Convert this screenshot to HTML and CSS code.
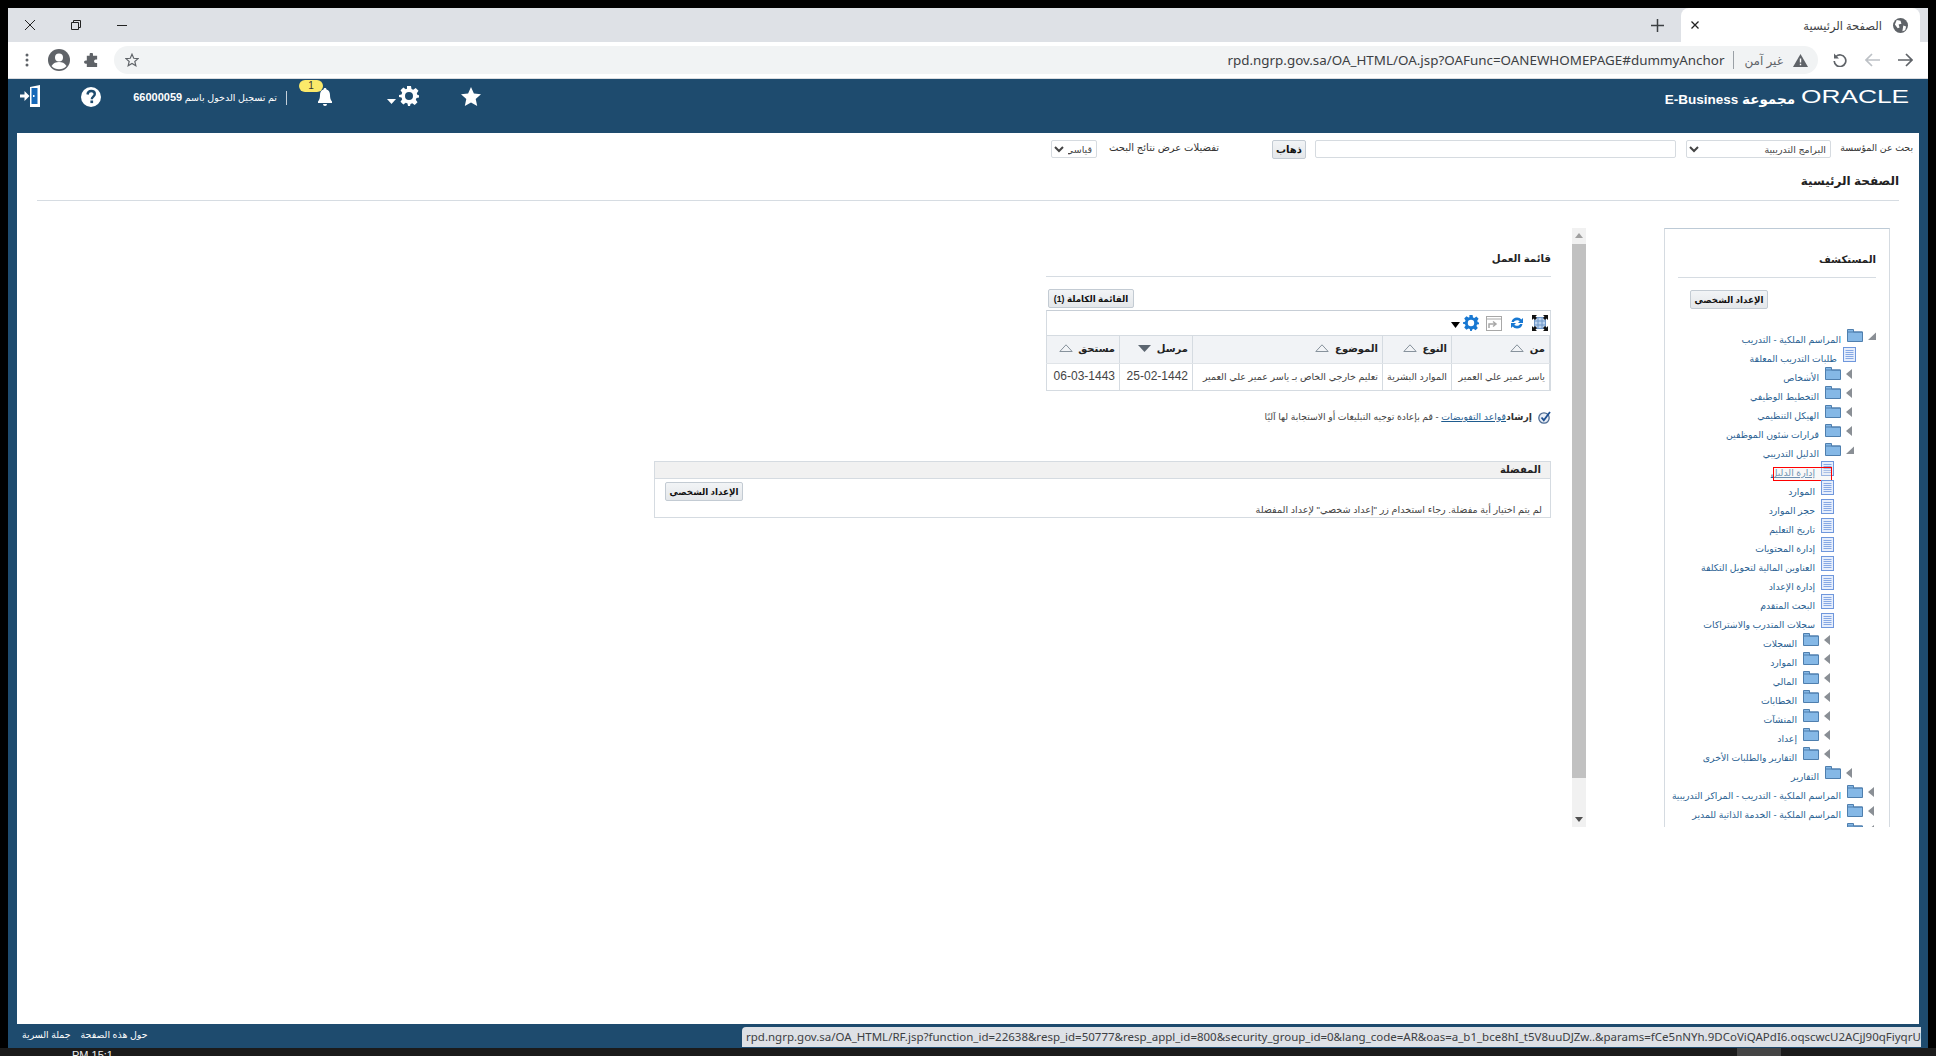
FILE: index.html
```html
<!DOCTYPE html>
<html lang="ar" dir="rtl">
<head>
  <meta charset="UTF-8">
  <title>الصفحة الرئيسية</title>
  <link rel="stylesheet" href="styles.css">
</head>
<body>
  <svg class="defs" width="0" height="0">
    <symbol id="folder" viewBox="0 0 16 13">
      <path d="M.5 12.500V.5h6v2.500h9v9.500z" fill="#85b8e6" stroke="#4f7fae"/>
      <path d="M.5 3h15" stroke="#4f7fae"/>
    </symbol>
    <symbol id="doc" viewBox="0 0 13 15">
      <rect x=".5" y=".5" width="12" height="14" fill="#e6eefc" stroke="#6f97dc"/>
      <path d="M2.500 3.500h8M2.500 5.500h8M2.500 7.500h8M2.500 9.500h8M2.500 11.500h8" stroke="#86a8e4"/>
    </symbol>
    <symbol id="closed" viewBox="0 0 8 12">
      <path d="M6 1v10L0 6z" fill="#8a8f95"/>
    </symbol>
    <symbol id="open" viewBox="0 0 8 12">
      <path d="M8 2.500V10H0z" fill="#8a8f95"/>
    </symbol>
    <symbol id="sort" viewBox="0 0 14 8">
      <path d="M.8 7.500L7 .8l6.200 6.700z" fill="none" stroke="#87929c"/>
    </symbol>
    <symbol id="gear" viewBox="0 0 20 20">
      <path fill-rule="evenodd" d="M8 0h4l.5 3 1.700.7L16.700 2l2.800 2.800-1.700 2.500.7 1.700 3 .5H20v2l-2.500.5-.7 1.700 1.700 2.500-2.800 2.800-2.500-1.700-1.700.7L11 20H9l-.5-2.500-1.700-.7-2.500 1.700L1.500 15.700l1.700-2.500-.7-1.700L0 11V9l2.500-.5.7-1.700L1.500 4.300 4.300 1.500l2.500 1.700 1.200-.5zM10 6a4 4 0 1 0 0 8 4 4 0 0 0 0-8z"/>
    </symbol>
  </svg>

  <div class="window">
    <div class="tabstrip">
      <div class="tab">
        <svg class="globe" width="15" height="15" viewBox="0 0 16 16"><circle cx="8" cy="8" r="8" fill="#5f6368"/><path d="M4 2l4 1 1 3-3 1 1 3-2 1-3-4zM11 8l3 1-1 4-3 1z" fill="#fff"/></svg>
        <span class="tab-title">الصفحة الرئيسية</span>
        <svg class="tab-close" width="8" height="8" viewBox="0 0 8 8"><path d="M.5.5l7 7M7.500.5l-7 7" stroke="#222" stroke-width="1.300"/></svg>
      </div>
      <svg class="new-tab" width="13" height="13" viewBox="0 0 13 13"><path d="M6.500 0v13M0 6.500h13" stroke="#3c4043" stroke-width="1.500"/></svg>
      <div class="win-controls">
        <svg width="10" height="1" viewBox="0 0 10 1"><path d="M0 .5h10" stroke="#222"/></svg>
        <svg width="10" height="10" viewBox="0 0 10 10"><path d="M.5 2.500h7v7h-7zM2.500 2.500v-2h7v7h-2" fill="none" stroke="#222"/></svg>
        <svg width="10" height="10" viewBox="0 0 10 10"><path d="M0 0l10 10M10 0L0 10" stroke="#222"/></svg>
      </div>
    </div>

    <div class="toolbar">
      <svg class="nav-icon" width="15" height="14" viewBox="0 0 15 14"><path d="M0 7h14M8 1l6 6-6 6" fill="none" stroke="#5f6368" stroke-width="1.700"/></svg>
      <svg class="nav-icon" width="15" height="14" viewBox="0 0 15 14"><path d="M15 7H1M7 1L1 7l6 6" fill="none" stroke="#bdc1c6" stroke-width="1.700"/></svg>
      <svg class="nav-icon" width="14" height="14" viewBox="0 0 14 14"><path d="M3 3.500A5.800 5.800 0 1 1 1.200 8" fill="none" stroke="#5f6368" stroke-width="1.700"/><path d="M1 .5v5h5z" fill="#5f6368"/></svg>
      <div class="omnibox">
        <svg width="15" height="13" viewBox="0 0 15 13"><path d="M7.500 0L15 13H0z" fill="#5f6368"/><path d="M7.500 4.500v4M7.500 9.700v1.500" stroke="#fff" stroke-width="1.400"/></svg>
        <span class="insecure">غير آمن</span>
        <span class="omni-sep"></span>
        <bdi class="url" dir="ltr">rpd.ngrp.gov.sa/OA_HTML/OA.jsp?OAFunc=OANEWHOMEPAGE#dummyAnchor</bdi>
        <svg class="omni-star" width="14" height="14" viewBox="0 0 24 24"><path d="M12 2l3 7 7.500.6-5.700 4.900 1.800 7.400L12 18l-6.600 3.900 1.800-7.400L1.500 9.600 9 9z" fill="none" stroke="#5f6368" stroke-width="2"/></svg>
      </div>
      <svg class="puzzle" width="15" height="15" viewBox="0 0 16 16"><path d="M6 1.500a1.800 1.800 0 0 1 3.600 0V3H14v4h-1.500a1.800 1.800 0 0 0 0 3.600H14V15H3v-3.500H1.800a1.800 1.800 0 0 1 0-3.600H3V3h3z" fill="#5f6368"/></svg>
      <svg class="profile" width="22" height="22" viewBox="0 0 22 22"><circle cx="11" cy="11" r="11" fill="#5f6368"/><circle cx="11" cy="8.500" r="4" fill="#fff"/><path d="M3.500 17c2-3.300 4.500-4 7.500-4s5.500.7 7.500 4c-2 2.200-4.500 3.300-7.500 3.300S5.500 19.200 3.500 17z" fill="#fff"/></svg>
      <svg class="dots" width="4" height="14" viewBox="0 0 4 14"><circle cx="2" cy="2" r="1.500" fill="#5f6368"/><circle cx="2" cy="7" r="1.500" fill="#5f6368"/><circle cx="2" cy="12" r="1.500" fill="#5f6368"/></svg>
    </div>

    <div class="app">
      <header class="app-header">
        <div class="brand">
          <span class="oracle">ORACLE</span>
          <span class="brand-name">مجموعة E-Business</span>
        </div>
        <div class="app-tools" dir="ltr">
          <svg class="ico-door" width="20" height="22" viewBox="0 0 20 22"><path d="M10 2l10-2v22H10z" fill="#fff"/><path d="M11.500 3h6v16h-6z" fill="#1668b8"/><rect x="13" y="10" width="1.500" height="2" fill="#fff"/><path d="M0 9.500h4.500V6l5 5-5 5v-3.500H0z" fill="#fff"/></svg>
          <svg class="ico-help" width="20" height="20" viewBox="0 0 20 20"><circle cx="10" cy="10" r="10" fill="#fff"/><path d="M6.500 7.500C6.800 5 8.300 4 10.200 4c2.200 0 3.600 1.300 3.600 3 0 2.700-3 2.600-3 5.200" fill="none" stroke="#1e4b6e" stroke-width="2.400"/><rect x="9.400" y="13.500" width="2.700" height="2.600" fill="#1e4b6e"/></svg>
          <span class="user" dir="rtl">تم تسجيل الدخول باسم <b>66000059</b></span>
          <span class="tools-sep"></span>
          <div class="bell-wrap">
            <span class="badge">1</span>
            <svg width="14" height="18" viewBox="0 0 14 18"><path d="M7 0c1 0 1.500.7 1.500 1.500C11 2.300 12 4.500 12 7c0 3 .6 5 2 6.500V15H0v-1.500C1.400 12 2 10 2 7c0-2.500 1-4.700 3.500-5.500C5.500.7 6 0 7 0zM5 16h4a2 2 0 0 1-4 0z" fill="#fff"/></svg>
          </div>
          <svg class="ico-caret" width="9" height="5" viewBox="0 0 9 5"><path d="M0 0h9L4.500 5z" fill="#fff"/></svg>
          <svg class="ico-gear" width="20" height="20" fill="#fff"><use href="#gear"/></svg>
          <svg class="ico-star" width="20" height="19" viewBox="0 0 20 19"><path d="M10 0l2.900 6.500 7.100.7-5.300 4.800 1.500 7L10 15.400 3.800 19l1.500-7L0 7.200l7.100-.7z" fill="#fff"/></svg>
        </div>
      </header>

      <main class="content">
        <form class="search-row">
          <label class="search-label">بحث عن المؤسسة</label>
          <select class="field select-org"><option>البرامج التدريبية</option></select>
          <input class="field search-input" type="text">
          <button type="button" class="btn btn-go">ذهاب</button>
          <label class="results-label">تفضيلات عرض نتائج البحث</label>
          <select class="field select-view"><option>قياسي</option></select>
        </form>

        <h1 class="page-title">الصفحة الرئيسية</h1>

        <div class="columns">
          <aside class="navigator">
            <h2 class="section-title">المستكشف</h2>
            <button type="button" class="btn btn-personal">الإعداد الشخصي</button>
            <div class="tree">
              <div class="row l0"><svg class="arrow"><use href="#open"/></svg><svg class="folder"><use href="#folder"/></svg><a>المراسم الملكية - التدريب</a></div>
              <div class="row d1"><svg class="doc"><use href="#doc"/></svg><a>طلبات التدريب المعلقة</a></div>
              <div class="row l1"><svg class="arrow"><use href="#closed"/></svg><svg class="folder"><use href="#folder"/></svg><a>الأشخاص</a></div>
              <div class="row l1"><svg class="arrow"><use href="#closed"/></svg><svg class="folder"><use href="#folder"/></svg><a>التخطيط الوظيفي</a></div>
              <div class="row l1"><svg class="arrow"><use href="#closed"/></svg><svg class="folder"><use href="#folder"/></svg><a>الهيكل التنظيمي</a></div>
              <div class="row l1"><svg class="arrow"><use href="#closed"/></svg><svg class="folder"><use href="#folder"/></svg><a>قرارات شئون الموظفين</a></div>
              <div class="row l1"><svg class="arrow"><use href="#open"/></svg><svg class="folder"><use href="#folder"/></svg><a>الدليل التدريبي</a></div>
              <div class="row d2 focused"><svg class="doc"><use href="#doc"/></svg><a>إدارة الدليل</a><span class="focus-box"></span></div>
              <div class="row d2"><svg class="doc"><use href="#doc"/></svg><a>الموارد</a></div>
              <div class="row d2"><svg class="doc"><use href="#doc"/></svg><a>حجز الموارد</a></div>
              <div class="row d2"><svg class="doc"><use href="#doc"/></svg><a>تاريخ التعليم</a></div>
              <div class="row d2"><svg class="doc"><use href="#doc"/></svg><a>إدارة المحتويات</a></div>
              <div class="row d2"><svg class="doc"><use href="#doc"/></svg><a>العناوين المالية لتحويل التكلفة</a></div>
              <div class="row d2"><svg class="doc"><use href="#doc"/></svg><a>إدارة الإعداد</a></div>
              <div class="row d2"><svg class="doc"><use href="#doc"/></svg><a>البحث المتقدم</a></div>
              <div class="row d2"><svg class="doc"><use href="#doc"/></svg><a>سجلات المتدرب والاشتراكات</a></div>
              <div class="row l2"><svg class="arrow"><use href="#closed"/></svg><svg class="folder"><use href="#folder"/></svg><a>السجلات</a></div>
              <div class="row l2"><svg class="arrow"><use href="#closed"/></svg><svg class="folder"><use href="#folder"/></svg><a>الموارد</a></div>
              <div class="row l2"><svg class="arrow"><use href="#closed"/></svg><svg class="folder"><use href="#folder"/></svg><a>المالي</a></div>
              <div class="row l2"><svg class="arrow"><use href="#closed"/></svg><svg class="folder"><use href="#folder"/></svg><a>الخطابات</a></div>
              <div class="row l2"><svg class="arrow"><use href="#closed"/></svg><svg class="folder"><use href="#folder"/></svg><a>المنشآت</a></div>
              <div class="row l2"><svg class="arrow"><use href="#closed"/></svg><svg class="folder"><use href="#folder"/></svg><a>إعداد</a></div>
              <div class="row l2"><svg class="arrow"><use href="#closed"/></svg><svg class="folder"><use href="#folder"/></svg><a>التقارير والطلبات الأخرى</a></div>
              <div class="row l1"><svg class="arrow"><use href="#closed"/></svg><svg class="folder"><use href="#folder"/></svg><a>التقارير</a></div>
              <div class="row l0"><svg class="arrow"><use href="#closed"/></svg><svg class="folder"><use href="#folder"/></svg><a>المراسم الملكية - التدريب - المراكز التدريبية</a></div>
              <div class="row l0"><svg class="arrow"><use href="#closed"/></svg><svg class="folder"><use href="#folder"/></svg><a>المراسم الملكية - الخدمة الذاتية للمدير</a></div>
              <div class="row l0"><svg class="arrow"><use href="#closed"/></svg><svg class="folder"><use href="#folder"/></svg><a></a></div>
            </div>
          </aside>

          <div class="scrollbar">
            <svg width="8" height="5" viewBox="0 0 8 5"><path d="M4 0l4 5H0z" fill="#a0a0a0"/></svg>
            <div class="thumb"></div>
            <svg width="8" height="5" viewBox="0 0 8 5"><path d="M0 0h8L4 5z" fill="#505050"/></svg>
          </div>

          <section class="main-col">
            <div class="worklist">
              <h2 class="section-title">قائمة العمل</h2>
              <button type="button" class="btn btn-full">القائمة الكاملة (1)</button>
              <div class="table-box">
                <div class="table-tools">
                  <svg width="16" height="16" viewBox="0 0 16 16"><rect x="2.500" y="2.500" width="11" height="11" fill="#bcd3ee" stroke="#6f97c8"/><path d="M2.500 6h11M2.500 10h11M6 2.500v11M10 2.500v11" stroke="#6f97c8"/><path d="M0 0h5L3.500 1.500 5 3 3 5 1.500 3.500 0 5zM16 0v5l-1.500-1.500L13 5l-2-2 1.500-1.500L11 0zM0 16v-5l1.500 1.500L3 11l2 2-1.500 1.500L5 16zM16 16h-5l1.500-1.500L11 13l2-2 1.500 1.500L16 11z" fill="#111"/></svg>
                  <svg width="14" height="14" viewBox="0 0 14 14"><path d="M1.500 6C2 3 4.300 1.500 7 1.500c2 0 3.300.8 4.300 2L13 2v5H8l1.700-1.700C9 4.500 8 4.200 7 4.200 5.400 4.200 4.300 5 4 6zM12.500 8c-.5 3-2.800 4.500-5.500 4.500-2 0-3.300-.8-4.300-2L1 12V7h5L4.300 8.700C5 9.500 6 9.800 7 9.800c1.600 0 2.700-.8 3-1.800z" fill="#1878d2"/></svg>
                  <svg width="16" height="15" viewBox="0 0 16 15"><rect x=".5" y=".5" width="15" height="14" fill="#fff" stroke="#a8a8a8"/><path d="M.5 3h15" stroke="#a8a8a8"/><path d="M3 12V8h6M7 5.500L10 8l-3 2.500" fill="none" stroke="#a8a8a8" stroke-width="1.500"/></svg>
                  <svg class="tools-gear" width="16" height="16" fill="#1878d2"><use href="#gear"/></svg>
                  <svg class="tools-caret" width="9" height="6" viewBox="0 0 9 6"><path d="M0 0h9L4.500 6z" fill="#000"/></svg>
                </div>
                <table class="notif-table">
                  <colgroup>
                    <col class="col-from"><col class="col-type"><col class="col-subject"><col class="col-date"><col class="col-date">
                  </colgroup>
                  <thead>
                    <tr>
                      <th>من <svg class="sort"><use href="#sort"/></svg></th>
                      <th>النوع <svg class="sort"><use href="#sort"/></svg></th>
                      <th>الموضوع <svg class="sort"><use href="#sort"/></svg></th>
                      <th>مرسل <svg class="sort-down" width="13" height="7" viewBox="0 0 13 7"><path d="M0 0h13L6.500 7z" fill="#5c6670"/></svg></th>
                      <th>مستحق <svg class="sort"><use href="#sort"/></svg></th>
                    </tr>
                  </thead>
                  <tbody>
                    <tr>
                      <td>ياسر عمير علي العمير</td>
                      <td>الموارد البشرية</td>
                      <td>تعليم خارجي الخاص بـ ياسر عمير علي العمير</td>
                      <td class="num">25-02-1442</td>
                      <td class="num">06-03-1443</td>
                    </tr>
                  </tbody>
                </table>
              </div>
              <p class="tip">
                <svg width="13" height="13" viewBox="0 0 13 13"><circle cx="6" cy="7" r="5.200" fill="#e9eef6" stroke="#4d6c94" stroke-width="1.300"/><path d="M3.500 6.500l2.300 2.700L12 1" fill="none" stroke="#1d4f91" stroke-width="1.800"/></svg>
                <span><b>إرشاد</b><a>قواعد التفويضات</a> - قم بإعادة توجيه التبليغات أو الاستجابة لها آليًا</span>
              </p>
            </div>

            <div class="favorites">
              <div class="fav-head">المفضلة</div>
              <div class="fav-body">
                <button type="button" class="btn btn-personal-fav">الإعداد الشخصي</button>
                <p class="fav-note">لم يتم اختيار أية مفضلة. رجاء استخدام زر "إعداد شخصي" لإعداد المفضلة</p>
              </div>
            </div>
          </section>
        </div>
      </main>

      <footer class="app-footer" dir="ltr">
        <span dir="rtl">جملة السرية</span>
        <span dir="rtl">حول هذه الصفحة</span>
      </footer>
    </div>

    <div class="status-url" dir="ltr">rpd.ngrp.gov.sa/OA_HTML/RF.jsp?function_id=22638&amp;resp_id=50777&amp;resp_appl_id=800&amp;security_group_id=0&amp;lang_code=AR&amp;oas=a_b1_bce8hI_t5V8uuDJZw..&amp;params=fCe5nNYh.9DCoViQAPdI6.oqscwcU2ACjJ90qFiyqrU</div>
  </div>

  <div class="taskbar" dir="ltr"><span>PM 15:1</span><i></i></div>
</body>
</html>
```

FILE: styles.css
```css
html, body {
  margin: 0;
  height: 100%;
  overflow: hidden;
}
body {
  background: #000;
  padding: 8px 8px 0;
  box-sizing: border-box;
  font-family: "Liberation Sans", "DejaVu Sans", sans-serif;
  font-size: 10px;
  color: #333;
}
.defs {
  position: absolute;
}
.window {
  position: relative;
  height: 1040px;
  display: flex;
  flex-direction: column;
}

/* browser chrome */
.tabstrip {
  height: 34px;
  flex-shrink: 0;
  background: #dee1e6;
  display: flex;
  align-items: center;
  padding-right: 8px;
}
.tab {
  width: 239px;
  height: 34px;
  background: #fff;
  border-radius: 8px 8px 0 0;
  display: flex;
  align-items: center;
  padding: 0 12px 0 10px;
  box-sizing: border-box;
  font-family: "Noto Sans", "DejaVu Sans", sans-serif;
  font-size: 11.500px;
  color: #3c4043;
}
.tab-title {
  margin-right: 11px;
}
.tab-close {
  margin-right: auto;
}
.new-tab {
  margin-right: 17px;
}
.win-controls {
  margin-right: auto;
  margin-left: 17px;
  display: flex;
  flex-direction: row;
  align-items: center;
  gap: 36px;
}
.toolbar {
  height: 37px;
  flex-shrink: 0;
  background: #fff;
  border-bottom: 1px solid #dadce0;
  box-sizing: border-box;
  display: flex;
  align-items: center;
  padding-right: 15px;
}
.nav-icon {
  margin-left: 18px;
}
.toolbar .nav-icon:nth-child(3) {
  margin-left: 15px;
}
.omnibox {
  width: 1704px;
  height: 28px;
  margin-left: 15px;
  background: #f1f3f4;
  border-radius: 14px;
  display: flex;
  align-items: center;
  box-sizing: border-box;
  padding: 0 10px 0 11px;
  font-family: "Noto Sans", "DejaVu Sans", sans-serif;
  font-size: 13.400px;
  color: #3c4043;
}
.insecure {
  margin-right: 10px;
  font-size: 12px;
  color: #5f6368;
}
.omni-sep {
  width: 1px;
  height: 18px;
  background: #9aa0a6;
  margin: 0 10px 0 9px;
}
.omni-star {
  margin-right: auto;
}
.puzzle {
  margin-left: 14px;
}
.profile {
  margin-left: 19px;
}

/* oracle application */
.app {
  flex: 1;
  min-height: 0;
  background: #1e4b6e;
  display: flex;
  flex-direction: column;
  padding: 0 9px;
}
.app-header {
  height: 54px;
  flex-shrink: 0;
  margin: 0 -9px;
  padding: 0 19px 0 12px;
  display: flex;
  justify-content: space-between;
  align-items: flex-start;
  color: #fff;
}
.brand {
  display: flex;
  align-items: center;
  gap: 6px;
  height: 25px;
  margin-top: 7px;
}
.oracle {
  display: block;
  width: 108px;
  height: 25px;
  margin-top: -2px;
  font-size: 18px;
  line-height: 25px;
  white-space: nowrap;
  direction: ltr;
  transform: scaleX(1.46);
  transform-origin: left center;
}
.brand-name {
  font-size: 13.500px;
  font-weight: bold;
}
.app-tools {
  display: flex;
  align-items: flex-start;
  padding-top: 1px;
}
.ico-door {
  margin-top: 5px;
}
.ico-help {
  margin: 7px 0 0 41px;
}
.user {
  margin: 9px 0 0 34px;
  width: 142px;
  line-height: 16px;
  white-space: nowrap;
  font-size: 9.500px;
}
.user b {
  font-size: 11px;
}
.tools-sep {
  width: 1px;
  height: 14px;
  margin: 11px 0 0 9px;
  background: #c5d0da;
}
.bell-wrap {
  position: relative;
  width: 46px;
  height: 26px;
  margin-left: 12px;
  padding: 8px 0 0 19px;
  box-sizing: border-box;
}
.badge {
  position: absolute;
  left: 0;
  top: 0;
  width: 24px;
  height: 12px;
  border-radius: 6px;
  background: #fbe96a;
  color: #333;
  font-size: 10px;
  line-height: 12px;
  text-align: center;
}
.ico-caret {
  margin: 19px 0 0 42px;
}
.ico-gear {
  margin: 6px 0 0 3px;
}
.ico-star {
  margin: 7px 0 0 42px;
}
.content {
  flex: 1;
  min-height: 0;
  background: #fff;
  display: flex;
  flex-direction: column;
}
.search-row {
  display: flex;
  align-items: center;
  height: 18px;
  margin-top: 7px;
  padding-right: 6px;
}
.search-label {
  width: 73px;
  padding-bottom: 3px;
  white-space: nowrap;
  font-size: 9.400px;
  color: #333;
}
.field {
  height: 18px;
  box-sizing: border-box;
  border: 1px solid #d6dbe0;
  border-radius: 2px;
  background: #fff;
  font-family: inherit;
  font-size: 9.500px;
  color: #444;
}
.select-org {
  width: 145px;
  margin-right: 9px;
}
.search-input {
  width: 361px;
  margin-right: 10px;
}
.btn {
  display: block;
  height: 19px;
  padding: 0;
  border: 1px solid #c3cbd3;
  border-radius: 2px;
  background: linear-gradient(#f2f4f6, #e4e7ea);
  color: #111;
  font-family: inherit;
  font-size: 8.700px;
  font-weight: bold;
  white-space: nowrap;
}
.btn-go {
  width: 34px;
  margin-right: 9px;
  font-size: 10px;
}
.results-label {
  margin-right: 53px;
  width: 111px;
  padding-bottom: 3px;
  white-space: nowrap;
}
.select-view {
  width: 46px;
  margin-right: 11px;
}
.page-title {
  margin: 14px 20px 27px;
  height: 28px;
  line-height: 18px;
  border-bottom: 1px solid #d6dce2;
  font-size: 12px;
  color: #222;
}
.columns {
  display: flex;
  align-items: flex-start;
  height: 599px;
  padding-right: 29px;
}
.section-title {
  margin: 0;
  height: 49px;
  box-sizing: border-box;
  padding-top: 21px;
  line-height: 20px;
  border-bottom: 1px solid #d6dce2;
  font-size: 10.200px;
  color: #222;
}

/* navigator tree */
.navigator {
  width: 226px;
  height: 599px;
  flex-shrink: 0;
  box-sizing: border-box;
  border: 1px solid #d5dbe1;
  border-top-color: #bdcad6;
  border-bottom: 0;
  padding: 0 13px;
  overflow: hidden;
}
.btn-personal {
  width: 78px;
  margin: 12px 108px 20px 0;
}
.tree {
  width: 198px;
  font-size: 9.300px;
}
.row {
  position: relative;
  height: 19px;
  display: flex;
  align-items: flex-start;
  white-space: nowrap;
}
.row a {
  line-height: 23px;
  color: #2a5f92;
}
.arrow {
  width: 8px;
  height: 12px;
  flex-shrink: 0;
  margin: 1px 0 0 5px;
}
.folder {
  width: 16px;
  height: 13px;
  flex-shrink: 0;
  margin-left: 6px;
}
.doc {
  width: 13px;
  height: 15px;
  flex-shrink: 0;
  margin: -1px 0 0 6px;
}
.l1 {
  padding-right: 22px;
}
.l2 {
  padding-right: 44px;
}
.d1 {
  padding-right: 20px;
}
.d2 {
  padding-right: 42px;
}
.focused a {
  text-decoration: underline;
}
.focus-box {
  position: absolute;
  right: 44px;
  top: 5px;
  width: 57px;
  height: 12px;
  border: 1.500px solid #f00;
  background: rgba(235, 235, 235, .35);
}

/* scrollbar */
.scrollbar {
  width: 14px;
  height: 599px;
  margin-right: 78px;
  flex-shrink: 0;
  background: #f1f1f1;
  display: flex;
  flex-direction: column;
  align-items: center;
  justify-content: space-between;
  padding: 5px 0;
  box-sizing: border-box;
}
.thumb {
  width: 14px;
  height: 534px;
  margin-top: 6px;
  margin-bottom: auto;
  background: #c1c1c1;
}

/* main column */
.main-col {
  width: 897px;
  margin-right: 21px;
  flex-shrink: 0;
}
.worklist {
  width: 505px;
}
.btn-full {
  width: 86px;
  margin: 12px 417px 2px 0;
}
.table-box {
  border: 1px solid #d5dbe1;
  border-top-color: #c7ced6;
}
.table-tools {
  height: 24px;
  display: flex;
  align-items: center;
  gap: 8px;
  padding-right: 2px;
}
.tools-gear {
  margin-right: -1px;
}
.tools-caret {
  margin: 3px -5px 0 0;
}
.notif-table {
  width: 503px;
  border-collapse: collapse;
  table-layout: fixed;
}
.col-from {
  width: 98px;
}
.col-type {
  width: 69px;
}
.col-subject {
  width: 190px;
}
.col-date {
  width: 73px;
}
.notif-table th, .notif-table td {
  padding: 0 4px 2px;
  text-align: right;
  white-space: nowrap;
  overflow: hidden;
  border-right: 1px solid #d5dbe1;
  border-left: 1px solid #d5dbe1;
}
.notif-table th {
  height: 25px;
  background: #f1f3f6;
  border-top: 1px solid #d5dbe1;
  border-bottom: 1px solid #e0e4e8;
  color: #222;
}
.notif-table td {
  height: 24px;
  font-size: 9.500px;
  color: #444;
}
.notif-table td.num {
  font-size: 12px;
}
.sort {
  width: 14px;
  height: 8px;
  margin-right: 3px;
}
.sort-down {
  margin-right: 3px;
}
.tip {
  margin: 19px 0 0;
  display: flex;
  align-items: center;
  gap: 6px;
  line-height: 14px;
  font-size: 9.300px;
  color: #444;
}
.tip b {
  color: #333;
}
.tip a {
  color: #1f5c8f;
  text-decoration: underline;
}
.favorites {
  margin-top: 37px;
  width: 897px;
}
.fav-head {
  height: 18px;
  box-sizing: border-box;
  border: 1px solid #d5dbe1;
  background: #f1f1f1;
  padding-right: 9px;
  line-height: 16px;
  font-weight: bold;
  color: #222;
}
.fav-body {
  height: 39px;
  box-sizing: border-box;
  border: 1px solid #d5dbe1;
  border-top: 0;
  padding: 3px 8px 0 0;
}
.btn-personal-fav {
  width: 78px;
  margin: 0 799px 0 0;
}
.fav-note {
  margin: 2px 0 0;
  line-height: 13px;
  font-size: 9.600px;
  color: #444;
}
.app-footer {
  height: 24px;
  flex-shrink: 0;
  display: flex;
  align-items: center;
  gap: 10px;
  padding: 0 0 3px 5px;
  box-sizing: border-box;
  font-size: 9.400px;
  color: #fff;
}

/* link target shown by the browser */
.status-url {
  position: absolute;
  right: 7px;
  bottom: 1px;
  width: 1179px;
  height: 20px;
  box-sizing: border-box;
  padding: 0 4px;
  background: #dee1e6;
  border-top-left-radius: 4px;
  font-family: "Noto Sans", "DejaVu Sans", sans-serif;
  font-size: 11.500px;
  line-height: 20px;
  color: #3c4043;
  white-space: nowrap;
  overflow: hidden;
}
.taskbar {
  height: 8px;
  margin: 0 -8px;
  background: #1b1b1b;
  overflow: hidden;
  position: relative;
  display: flex;
  color: #eee;
  font-size: 11px;
  line-height: 14px;
  padding-left: 72px;
}
.taskbar i {
  display: block;
  width: 44px;
  height: 8px;
  margin-left: 1624px;
  background: #444;
}
```
